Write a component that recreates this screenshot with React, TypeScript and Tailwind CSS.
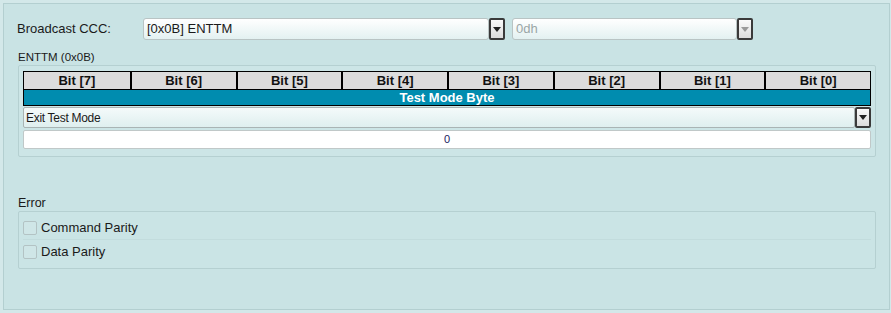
import React from 'react';

const BITS = ['Bit [7]', 'Bit [6]', 'Bit [5]', 'Bit [4]', 'Bit [3]', 'Bit [2]', 'Bit [1]', 'Bit [0]'];

function Arrow({ disabled = false }: { disabled?: boolean }) {
  return (
    <div className="flex w-[16px] shrink-0 items-center justify-center self-stretch rounded-[2px] border-2 border-[#3a3a3a] bg-gradient-to-b from-[#fafafa] to-[#dcdcdc]">
      <svg width="8" height="5" viewBox="0 0 8 5">
        <path d="M0 0h8L4 5z" fill={disabled ? '#9a9a9a' : '#222'} />
      </svg>
    </div>
  );
}

function Select({
  value,
  width,
  disabled = false,
}: {
  value: string;
  width: string;
  disabled?: boolean;
}) {
  return (
    <div className={`flex h-[22px] ${width}`}>
      <div
        className={`flex flex-1 items-center rounded-[3px] border border-[#b9c4c4] bg-gradient-to-b from-white to-[#e3f1f1] pl-[3px] text-[13px] ${
          disabled ? 'text-[#9aa6a6]' : 'text-[#1a1a1a]'
        }`}
      >
        {value}
      </div>
      <Arrow disabled={disabled} />
    </div>
  );
}

export default function App() {
  return (
    <div
      className="h-[313px] w-[891px] bg-[#d3e8e9] pt-[3px] pl-[3px]"
      style={{ fontFamily: '"Liberation Sans", Arial, sans-serif' }}
    >
      <div className="flex h-[307px] w-[887px] flex-col border border-[#b3cfd0] bg-[#c9e3e4]">
        {/* Broadcast row */}
        <div className="mt-[14px] flex items-center pl-[13px]">
          <span className="w-[126px] text-[13px] text-[#1a1a1a]">Broadcast CCC:</span>
          <Select value="[0x0B] ENTTM" width="w-[362px]" />
          <div className="w-[7px]" />
          <Select value="0dh" width="w-[241px]" disabled />
        </div>

        {/* ENTTM group */}
        <div className="mt-[10px] pl-[14px] text-[11.5px] leading-[14px] text-[#1a1a1a]">ENTTM (0x0B)</div>
        <div className="ml-[14px] mt-[1px] w-[858px] rounded-[2px] border border-[#b5d0d1] bg-[#cce5e6] px-[4px] pt-[5px] pb-[7px]">
          <div className="border border-black">
            <div className="grid grid-cols-8 bg-[#dcdcdc]">
              {BITS.map((b, i) => (
                <div
                  key={b}
                  className={`h-[17px] text-center text-[13px] font-bold leading-[17px] text-[#111] ${
                    i > 0 ? 'border-l-2 border-black' : ''
                  }`}
                >
                  {b}
                </div>
              ))}
            </div>
            <div className="h-[16px] border-t border-black bg-[#008caf] text-center text-[13px] font-bold leading-[16px] text-white">
              Test Mode Byte
            </div>
          </div>
          <div className="mt-[1px] flex h-[21px]">
            <div className="flex flex-1 items-center rounded-[2px] border border-[#a9b4b4] bg-gradient-to-b from-[#f4fafa] to-[#dfefef] pl-[2px] text-[12px] tracking-[-0.3px] text-[#1a1a1a]">
              Exit Test Mode
            </div>
            <Arrow />
          </div>
          <div className="mt-[2px] flex h-[19px] items-center justify-center rounded-[2px] border border-[#c0c8c8] bg-white text-[11px] text-[#1a1a60]">
            0
          </div>
        </div>

        {/* Error group */}
        <div className="mt-[39px] pl-[14px] text-[12.5px] leading-[14px] text-[#1a1a1a]">Error</div>
        <div className="ml-[14px] mt-[1px] w-[858px] rounded-[2px] border border-[#b5d0d1] bg-[#cae4e5] px-[4px] pt-[4px] pb-[4px]">
          {['Command Parity', 'Data Parity'].map((t, i) => (
            <div
              key={t}
              className={`flex h-[24px] items-center gap-[4px] ${
                i === 0 ? 'border-b border-[#c2dcdd]' : ''
              }`}
            >
              <div className="h-[14px] w-[14px] rounded-[2px] border border-[#b3c3c4] bg-[#cfe6e7]" />
              <span className="text-[13px] text-[#1a1a1a]">{t}</span>
            </div>
          ))}
        </div>
      </div>
    </div>
  );
}
